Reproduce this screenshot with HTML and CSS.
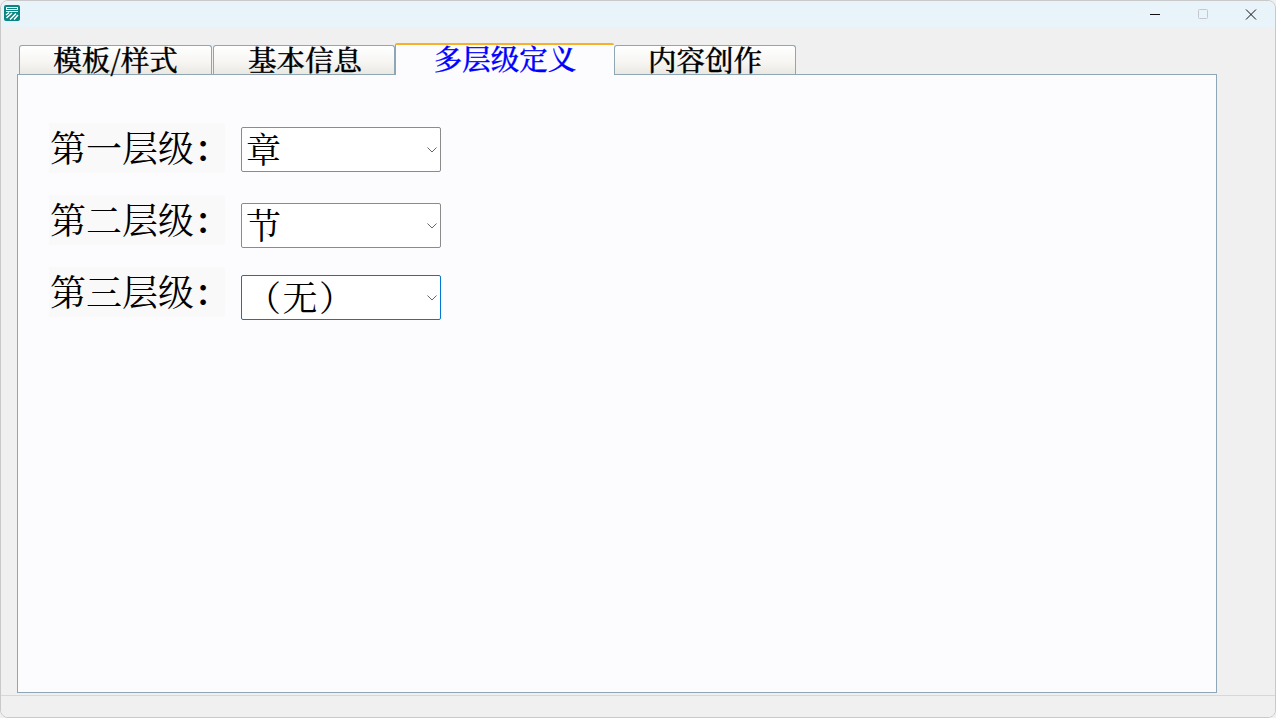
FILE: index.html
```html
<!DOCTYPE html>
<html lang="zh-CN">
<head>
<meta charset="utf-8">
<title>多层级定义</title>
<link rel="stylesheet" href="styles.css">
</head>
<body>
<div class="window">
  <header class="titlebar">
    <svg class="app-icon" width="16" height="16" viewBox="0 0 16 16">
      <rect x="0" y="0" width="16" height="16" rx="2" fill="#0b8583"/>
      <rect x="2.5" y="2.5" width="11" height="2" fill="#0b8583" stroke="#fff"/>
      <path d="M2 6.5H14" stroke="#fff" fill="none"/>
      <path d="M2 10L5 7.5M2.5 13L8 8M6 14.5L12 8.5M10 14.5L14 10" stroke="#fff" stroke-width="1.5" fill="none"/>
    </svg>
    <div class="window-buttons">
      <svg class="wbtn" width="48" height="26" viewBox="0 0 48 26"><path d="M19 13.5H29" stroke="#111" stroke-width="1"/></svg>
      <svg class="wbtn" width="48" height="26" viewBox="0 0 48 26"><rect x="19.5" y="8.5" width="9" height="9" rx="1" fill="none" stroke="#c4c8cc"/></svg>
      <svg class="wbtn" width="48" height="26" viewBox="0 0 48 26"><path d="M19 8.5L29 18.5M29 8.5L19 18.5" stroke="#111" stroke-width="1"/></svg>
    </div>
  </header>
  <main class="content">
    <nav class="tabs">
      <div class="tab tab-a">模板/样式</div>
      <div class="tab tab-b">基本信息</div>
      <div class="tab tab-c active">多层级定义</div>
      <div class="tab tab-d">内容创作</div>
    </nav>
    <section class="panel">
      <div class="row">
        <div class="label">第一层级<span class="colon">：</span></div>
        <div class="combo first"><span>章</span><svg class="chev" width="10" height="6" viewBox="0 0 10 6"><path d="M.5 .5L5 5L9.5 .5" fill="none" stroke="#666"/></svg></div>
      </div>
      <div class="row">
        <div class="label">第二层级<span class="colon">：</span></div>
        <div class="combo"><span>节</span><svg class="chev" width="10" height="6" viewBox="0 0 10 6"><path d="M.5 .5L5 5L9.5 .5" fill="none" stroke="#666"/></svg></div>
      </div>
      <div class="row">
        <div class="label">第三层级<span class="colon">：</span></div>
        <div class="combo focus"><span>（无）</span><svg class="chev" width="10" height="6" viewBox="0 0 10 6"><path d="M.5 .5L5 5L9.5 .5" fill="none" stroke="#666"/></svg></div>
      </div>
    </section>
  </main>
  <footer class="statusbar"></footer>
</div>
</body>
</html>
```
FILE: styles.css
```css
* { box-sizing: border-box; }
html, body { margin: 0; padding: 0; background: #f0f0f0; }
body {
  width: 1276px;
  height: 718px;
  overflow: hidden;
  font-family: "Noto Serif CJK SC", "Source Han Serif SC", "Liberation Serif", "Noto Sans CJK SC", serif;
  color: #000;
}
.window {
  width: 1276px;
  height: 718px;
  border: 1px solid #c9c9c9;
  border-radius: 8px;
  background: #f0f0f0;
  overflow: hidden;
  display: flex;
  flex-direction: column;
}
.titlebar {
  height: 26px;
  flex: none;
  background: #e9f3fa;
  display: flex;
  align-items: center;
  justify-content: space-between;
  padding-left: 3px;
}
.app-icon { margin-top: -2px; }
.window-buttons { display: flex; margin-right: 0; }
.wbtn { display: block; }
.content {
  flex: 1;
  padding: 18px 0 0 16px;
  display: flex;
  flex-direction: column;
}
.tabs {
  display: flex;
  height: 30px;
  padding-left: 2px;
  margin-bottom: -1px;
  position: relative;
  z-index: 1;
}
.tab {
  height: 29px;
  border: 1px solid #8fa6b4;
  border-bottom: 0;
  border-radius: 3px 3px 0 0;
  background: linear-gradient(#ffffff 0%, #f6f5f2 60%, #e9e8e2 100%);
  font-size: 28.5px;
  font-weight: 500;
  -webkit-text-stroke: 0.3px currentColor;
  line-height: 26px;
  text-align: center;
  white-space: nowrap;
}
.tab-a { width: 193px; }
.tab-b { width: 182px; margin-left: 1px; padding-left: 2px; }
.tab-c { width: 219px; }
.tab-d { width: 182px; }
.tab.active {
  height: 32px;
  margin-top: -2px;
  color: #0000ff;
  background: #fcfcff;
  border: 0;
  border-left: 1px solid #8fa6b4;
  border-top: 2px solid #f6b02c;
  border-radius: 2px 2px 0 0;
  line-height: 26px;
}
.panel {
  width: 1200px;
  height: 619px;
  flex: none;
  border: 1px solid #8fa6b4;
  background: #fcfcff;
  padding: 48px 0 0 31px;
  display: flex;
  flex-direction: column;
  gap: 22px;
}
.row {
  height: 50px;
  display: flex;
  align-items: flex-start;
  gap: 16px;
}
.label {
  width: 176px;
  height: 50px;
  background: #f9f9f9;
  font-size: 36px;
  line-height: 48px;
  padding-left: 1px;
  white-space: nowrap;
}
.colon { font-weight: 600; }
.combo {
  width: 200px;
  height: 45px;
  margin-top: 8px;
  background: #fff;
  border: 1px solid #8b8b8b;
  border-radius: 2px;
  font-size: 35px;
  line-height: 40px;
  padding-left: 4px;
  letter-spacing: 1.5px;
  display: flex;
  align-items: center;
  justify-content: space-between;
  white-space: nowrap;
}
.combo span { margin-top: -3px; }
.combo.first { margin-top: 4px; }
.combo.focus { border-color: #0078d4; }
.chev { margin-right: 3px; margin-top: 1px; flex: none; }
.statusbar {
  height: 22px;
  flex: none;
  margin-top: 2px;
  border-top: 1px solid #d8d8d8;
  background: #f0f0f0;
}
```
